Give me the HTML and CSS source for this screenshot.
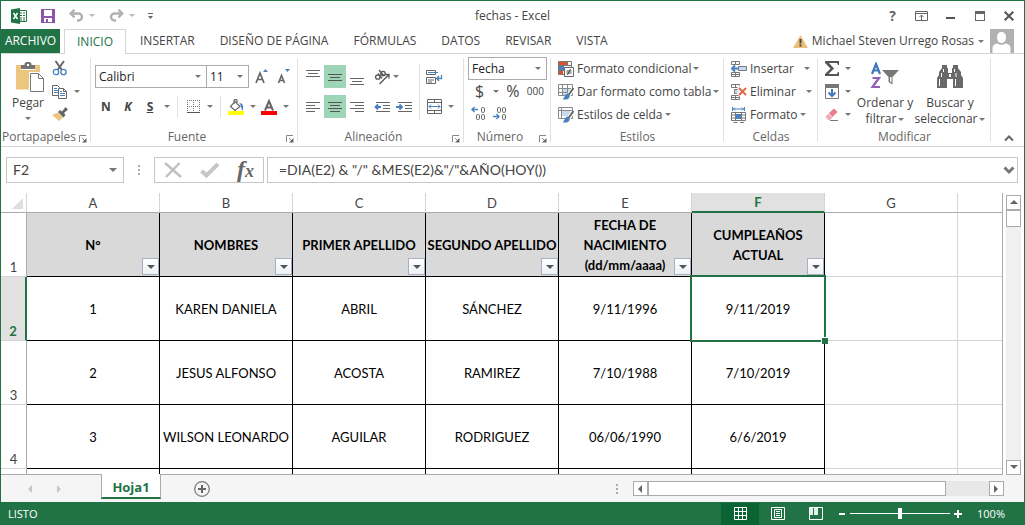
FILE: index.html
```html
<!DOCTYPE html>
<html lang="es">
<head>
<meta charset="utf-8">
<title>fechas - Excel</title>
<link rel="stylesheet" href="styles.css">
</head>
<body>
<div class="window">

  <header class="titlebar">
    <div class="quick">
      <svg class="logo" width="16" height="16" viewBox="0 0 16 16" aria-hidden="true"><path fill="#fff" stroke="#217346" d="M8 2.500h7.500v11H8z"/><path stroke="#217346" d="M9 5h2M12 5h2M9 7.500h2M12 7.500h2M9 10h2M12 10h2M9 12h2M12 12h2"/><path fill="#217346" d="M0 1.500 9 0v16l-9-1.500z"/><path stroke="#fff" stroke-width="1.500" fill="none" d="m2.500 5 4 6m0-6-4 6"/></svg>
      <button class="tool save" aria-label="Guardar"><svg width="14" height="14" viewBox="0 0 14 14"><path fill="#8a57ab" fill-rule="evenodd" d="M0 0h14v14H0zM3 1v6h8V1zM3 9v4h2v-3h2v3h4V9z"/></svg></button>
      <button class="tool undo" aria-label="Deshacer"><svg width="15" height="13" viewBox="0 0 15 13"><path fill="none" stroke="#b1b1b1" stroke-width="2.400" d="M2 4.500h7.500a3.500 3.500 0 0 1 0 7H8"/><path fill="none" stroke="#b1b1b1" stroke-width="2.400" d="M5.500.7 1.700 4.500l3.800 3.800"/></svg></button>
      <span class="caret light"></span>
      <button class="tool redo" aria-label="Rehacer"><svg width="15" height="13" viewBox="0 0 15 13"><path fill="none" stroke="#b1b1b1" stroke-width="2.400" d="M13 4.500H5.500a3.500 3.500 0 0 0 0 7H7"/><path fill="none" stroke="#b1b1b1" stroke-width="2.400" d="m9.500.7 3.800 3.800-3.800 3.800"/></svg></button>
      <span class="caret light"></span>
      <button class="tool more" aria-label="Personalizar"><svg width="6" height="6" viewBox="0 0 6 6"><path fill="#666" d="M0 0h5v1H0zM0 3h5L2.500 6z"/></svg></button>
    </div>
    <h1 class="title">fechas - Excel</h1>
    <div class="controls">
      <button class="tool help" aria-label="Ayuda">?</button>
      <button class="tool" aria-label="Opciones de cinta"><svg width="13" height="10" viewBox="0 0 13 10"><path fill="none" stroke="#666" d="M.5.5h12v9H.5zM.5 2.500h12M6.500 9V4M4.500 6l2-2 2 2"/></svg></button>
      <button class="tool" aria-label="Minimizar"><svg width="10" height="10" viewBox="0 0 10 10"><path fill="#555" d="M0 6h9v2H0z"/></svg></button>
      <button class="tool" aria-label="Maximizar"><svg width="10" height="10" viewBox="0 0 10 10"><path fill="#666" fill-rule="evenodd" d="M0 0h10v10H0zM1 3v6h8V3z"/></svg></button>
      <button class="tool" aria-label="Cerrar"><svg width="10" height="10" viewBox="0 0 10 10"><path stroke="#555" stroke-width="2" d="m.7.7 8.600 8.600m0-8.600L.7 9.300"/></svg></button>
    </div>
  </header>

  <nav class="tabs">
    <button class="tab file">ARCHIVO</button>
    <button class="tab active">INICIO</button>
    <button class="tab">INSERTAR</button>
    <button class="tab">DISEÑO DE PÁGINA</button>
    <button class="tab">FÓRMULAS</button>
    <button class="tab">DATOS</button>
    <button class="tab">REVISAR</button>
    <button class="tab">VISTA</button>
    <button class="account">
      <svg width="15" height="13" viewBox="0 0 15 13"><path fill="#ecc07a" d="M7.500 0 15 13H0z"/><path fill="#444" d="M6.500 4h2v4.500h-2zM6.500 9.500h2v2h-2z"/></svg>
      <span>Michael Steven Urrego Rosas</span>
      <span class="caret"></span>
      <svg class="avatar" width="24" height="24" viewBox="0 0 24 24"><path fill="#b1b1b1" d="M0 0h24v24H0z"/><path fill="#fff" d="M11.500 3c3 0 4.500 2 4.500 5s-1.500 6-4.500 6S7 11 7 8s1.500-5 4.500-5M2.500 24v-5c0-2.500 2-4 5-4.500 2 1.700 6 1.700 8 0 3 .5 5 2 5 4.500v5z"/></svg>
    </button>
  </nav>

  <div class="ribbon">
    <section class="group clipboard">
      <div class="body">
        <button class="big paste">
          <svg width="28" height="31" viewBox="0 0 28 31"><path fill="#ecc57f" d="M0 3h24v24.500H0z"/><path fill="#fff" d="M4 3h16v6H4z"/><path fill="#ecc57f" d="M4 3h1v6H4zM19 3h1v6h-1zM5 8h14v1H5z"/><path fill="#737373" d="M5 3h3.500V1.500L10 0h4l1.500 1.500V3H19v4H5z"/><path fill="#fff" d="M11 2h2v2h-2z"/><path fill="#fff" stroke="#fff" stroke-width="3" d="M14.500 11.500h8l5 5v13h-13z"/><path fill="#fff" stroke="#777" d="M14.500 11.500h8l5 5v13h-13zM22.500 11.500v5h5"/></svg>
          <span>Pegar</span>
          <span class="caret"></span>
        </button>
        <div class="stack">
          <button class="tool" aria-label="Cortar"><svg width="16" height="16" viewBox="0 0 16 16"><path fill="none" stroke="#666" stroke-width="2" d="m3.500 1 6.500 9M12 1l-6.500 9"/><circle cx="4" cy="12" r="2.700" fill="none" stroke="#4a80bd" stroke-width="1.300"/><circle cx="11.500" cy="12" r="2.700" fill="none" stroke="#4a80bd" stroke-width="1.300"/></svg></button>
          <span class="pair"><button class="tool" aria-label="Copiar"><svg width="16" height="14" viewBox="0 0 16 14"><path fill="#fff" stroke="#666" d="M.5.5h5l2 2v8h-7z"/><path stroke="#4a80bd" d="M2 3.500h3M2 5.500h4M2 7.500h4"/><path fill="#fff" stroke="#666" d="M6.500 3.500h5l3 3v7h-8zM11.500 3.500v3h3"/><path stroke="#4a80bd" d="M8 6.500h2M8 8.500h5M8 10.500h5"/></svg></button><span class="caret"></span></span>
          <button class="tool" aria-label="Copiar formato"><svg width="16" height="14" viewBox="0 0 16 14"><path fill="#ecc57f" d="m0 8 6-2.500 5 5L7 14z"/><path fill="#666" d="m6 5 2-2 2 1.500L13.500 0 16 2.500 12 6l1.500 2-2 2.500z"/></svg></button>
        </div>
      </div>
      <h2 class="label">Portapapeles</h2><button class="launch" aria-label="Más opciones de Portapapeles"><svg width="8" height="8" viewBox="0 0 8 8"><path fill="none" stroke="#888" d="M.5 7V.5H7M3 3l3 3"/><path fill="#666" d="M7.500 3v4.500H3z"/></svg></button>
    </section>

    <section class="group font">
      <div class="body rows">
        <div class="row">
          <span class="combo name"><select aria-label="Fuente"><option>Calibri</option></select></span><span class="combo size"><select aria-label="Tamaño de fuente"><option>11</option></select></span>
          <button class="tool cell grow" aria-label="Aumentar tamaño"><svg width="14" height="16" viewBox="0 0 14 16"><path fill="none" stroke="#666" stroke-width="1.700" d="m1 14 4-10L9 14M2.500 10.500h5"/><path fill="#4a80bd" d="M8 3h5l-2.500-3z"/></svg></button>
          <button class="tool cell" aria-label="Disminuir tamaño"><svg width="14" height="16" viewBox="0 0 14 16"><path fill="none" stroke="#666" stroke-width="1.600" d="m1.500 14 3-7.500 3 7.500M2.500 11.500h4"/><path fill="#4a80bd" d="M8 0h5l-2.500 3z"/></svg></button>
        </div>
        <div class="row">
          <button class="tool cell"><b>N</b></button>
          <button class="tool cell"><b><i>K</i></b></button>
          <button class="tool cell"><b><u>S</u></b></button>
          <span class="caret wide"></span>
          <span class="rule"></span>
          <button class="tool cell" aria-label="Bordes"><svg width="13" height="14" viewBox="0 0 13 14"><path stroke="#777" stroke-dasharray="1 1" d="M0 .5h13M0 6.500h13M.5 0v13M6.500 0v13M12.500 0v13"/><path stroke="#555" d="M0 12.500h13"/></svg></button>
          <span class="caret wide"></span>
          <span class="rule"></span>
          <button class="tool cell" aria-label="Color de relleno"><svg width="16" height="16" viewBox="0 0 16 16"><path fill="#fff" stroke="#666" stroke-width="1.200" d="m7 2.500 5 5L7 11.500 2.500 7.500zM6 5V1.500c0-1.500 3-1.500 3 0V5"/><path fill="#4a80bd" d="M11 4c4 0 5 3 3.500 8C13 10 14 7 11 4"/><path fill="#ff0" d="M0 12h16v4H0z"/></svg></button>
          <span class="caret wide"></span>
          <button class="tool cell" aria-label="Color de fuente"><svg width="16" height="16" viewBox="0 0 16 16"><path fill="none" stroke="#666" stroke-width="2" d="m4 11.500 4-9.500 4 9.500M5.500 8.500h5"/><path fill="#f00" d="M0 12h16v4H0z"/></svg></button>
          <span class="caret wide"></span>
        </div>
      </div>
      <h2 class="label">Fuente</h2><button class="launch" aria-label="Más opciones de Fuente"><svg width="8" height="8" viewBox="0 0 8 8"><path fill="none" stroke="#888" d="M.5 7V.5H7M3 3l3 3"/><path fill="#666" d="M7.500 3v4.500H3z"/></svg></button>
    </section>

    <section class="group align">
      <div class="body split">
        <div class="rows">
          <div class="row">
            <button class="tool cell" aria-label="Alinear arriba"><svg width="14" height="16" viewBox="0 0 14 16"><path stroke="#666" d="M0 1.500h14M2 4.500h10M0 7.500h14"/></svg></button>
            <button class="tool cell on" aria-label="Alinear en medio"><svg width="14" height="16" viewBox="0 0 14 16"><path stroke="#555" d="M0 5.500h14M2 8.500h10M0 11.500h14"/></svg></button>
            <button class="tool cell" aria-label="Alinear abajo"><svg width="14" height="16" viewBox="0 0 14 16"><path stroke="#666" d="M0 9.500h14M2 12.500h10M0 15.500h14"/></svg></button>
            <button class="tool cell angle" aria-label="Orientación"><svg width="17" height="16" viewBox="0 0 17 16"><g fill="none" stroke="#555" stroke-width="1.300"><circle cx="3.800" cy="8" r="2.200"/><path d="m4 4.500 4 5M5 1l5 6"/><circle cx="9" cy="4.500" r="2.200"/><path d="m5.500 15 9-9M11 5.500h4v4"/></g></svg></button>
            <span class="caret wide"></span>
          </div>
          <div class="row">
            <button class="tool cell" aria-label="Alinear a la izquierda"><svg width="14" height="12" viewBox="0 0 14 12"><path stroke="#666" d="M0 1.500h14M0 4.500h9M0 7.500h14M0 10.500h9"/></svg></button>
            <button class="tool cell on" aria-label="Centrar"><svg width="14" height="12" viewBox="0 0 14 12"><path stroke="#555" d="M0 1.500h14M2 4.500h10M0 7.500h14M2 10.500h10"/></svg></button>
            <button class="tool cell" aria-label="Alinear a la derecha"><svg width="14" height="12" viewBox="0 0 14 12"><path stroke="#666" d="M0 1.500h14M5 4.500h9M0 7.500h14M5 10.500h9"/></svg></button>
            <button class="tool cell angle" aria-label="Disminuir sangría"><svg width="16" height="12" viewBox="0 0 16 12"><path stroke="#666" d="M2 1.500h14M9 4.500h7M9 7.500h7M2 10.500h14"/><path fill="none" stroke="#4a80bd" stroke-width="1.800" d="M1 6h6M4 3.500 1.500 6 4 8.500"/></svg></button>
            <button class="tool cell" aria-label="Aumentar sangría"><svg width="16" height="12" viewBox="0 0 16 12"><path stroke="#666" d="M2 1.500h14M9 4.500h7M9 7.500h7M2 10.500h14"/><path fill="none" stroke="#4a80bd" stroke-width="1.800" d="M0 6h6M3.500 3.500 6 6 3.500 8.500"/></svg></button>
          </div>
        </div>
        <span class="rule tall"></span>
        <div class="rows">
          <div class="row"><button class="tool cell" aria-label="Ajustar texto"><svg width="17" height="16" viewBox="0 0 17 16"><path fill="#fff" stroke="#666" d="M.5 1.500h9v4h-9zM.5 8.500h9v6h-9zM2 11h6M2 13h4"/><path stroke="#4a80bd" d="M2 3.500h10"/><path fill="none" stroke="#4a80bd" stroke-width="1.300" d="M15.500 6v3.500H11M13 7l-2.300 2.500L13 12"/></svg></button></div>
          <div class="row"><button class="tool cell" aria-label="Combinar y centrar"><svg width="15" height="15" viewBox="0 0 15 15"><path fill="none" stroke="#666" d="M.5.5h14v14H.5zM.5 3.500h14M.5 11.500h14M7.500 0v3M7.500 12v3"/><path fill="none" stroke="#4a80bd" d="M2 7.500h11M4 5.500l-2 2 2 2M11 5.500l2 2-2 2"/></svg></button><span class="caret wide"></span></div>
        </div>
      </div>
      <h2 class="label">Alineación</h2><button class="launch" aria-label="Más opciones de Alineación"><svg width="8" height="8" viewBox="0 0 8 8"><path fill="none" stroke="#888" d="M.5 7V.5H7M3 3l3 3"/><path fill="#666" d="M7.500 3v4.500H3z"/></svg></button>
    </section>

    <section class="group number">
      <div class="body list">
        <span class="combo format"><select aria-label="Formato de número"><option>Fecha</option></select></span>
        <div class="row currency"><button class="tool sign">$</button><span class="caret"></span><button class="tool sign">%</button><button class="tool zeros">000</button></div>
        <div class="row decimals">
          <button class="tool" aria-label="Aumentar decimales"><svg width="15" height="14" viewBox="0 0 15 14"><path fill="none" stroke="#4a80bd" stroke-width="1.400" d="M1 3.500h6M3.500 1 1 3.500 3.500 6"/><g fill="none" stroke="#666"><rect x="10.500" y="1.500" width="3" height="5" rx="1.300"/><rect x="5.500" y="8.500" width="3" height="5" rx="1.300"/><rect x="10.500" y="8.500" width="3" height="5" rx="1.300"/></g></svg></button>
          <button class="tool" aria-label="Disminuir decimales"><svg width="15" height="14" viewBox="0 0 15 14"><path fill="none" stroke="#4a80bd" stroke-width="1.400" d="M1 10.500h6M4.500 8 7 10.500 4.500 13"/><g fill="none" stroke="#666"><rect x="5.500" y="1.500" width="3" height="5" rx="1.300"/><rect x="10.500" y="1.500" width="3" height="5" rx="1.300"/><rect x="10.500" y="8.500" width="3" height="5" rx="1.300"/></g></svg></button>
        </div>
      </div>
      <h2 class="label">Número</h2><button class="launch" aria-label="Más opciones de Número"><svg width="8" height="8" viewBox="0 0 8 8"><path fill="none" stroke="#888" d="M.5 7V.5H7M3 3l3 3"/><path fill="#666" d="M7.500 3v4.500H3z"/></svg></button>
    </section>

    <section class="group styles">
      <div class="body list">
        <button class="item"><svg width="16" height="16" viewBox="0 0 16 16"><path fill="#fff" stroke="#777" d="M.5.5h13v13H.5zM.5 4.500h13M.5 9.500h13M9.500 0v5"/><path fill="#d9532c" d="M1 1h8v3H1zM1 10h4v3H1z"/><path fill="#4a80bd" d="M1 5h5v4H1z"/><path fill="#fff" stroke="#666" d="M6.500 6.500h9v9h-9z"/><path stroke="#444" d="M8.500 10h5M8.500 12h5M12.500 8l-3 6"/></svg><span>Formato condicional</span><span class="caret"></span></button>
        <button class="item"><svg width="16" height="16" viewBox="0 0 16 16"><path fill="#c9daee" d="M4 4h10v8H4z"/><path fill="none" stroke="#888" d="M.5.5h14v11H.5zM.5 4.500h14M.5 8.500h14M4.500 0v12M9.500 0v12"/><path stroke="#fff" stroke-width="4" d="m15 5-5 7"/><path stroke="#666" stroke-width="2" d="m15.500 4-5 7"/><path fill="#4a80bd" d="M10 9.500c3 1 2 6-2 6H4.500C7 14 6 10 10 9.500"/></svg><span>Dar formato como tabla</span><span class="caret"></span></button>
        <button class="item"><svg width="16" height="16" viewBox="0 0 16 16"><path fill="#fff" stroke="#888" d="M.5.5h14v11H.5zM.5 3.500h14M3.500 0v12"/><path fill="#c9daee" d="M4 4h8v5H4z"/><path stroke="#fff" stroke-width="4" d="m15 5-5 7"/><path stroke="#666" stroke-width="2" d="m15.500 4-5 7"/><path fill="#4a80bd" d="M10 9.500c3 1 2 6-2 6H4.500C7 14 6 10 10 9.500"/></svg><span>Estilos de celda</span><span class="caret"></span></button>
      </div>
      <h2 class="label">Estilos</h2>
    </section>

    <section class="group cells">
      <div class="body list">
        <button class="item"><svg width="16" height="16" viewBox="0 0 16 16"><path fill="#fff" stroke="#777" d="M.5.5h8v3h-8zM4.500 0v4M.5 11.500h8v4h-8zM4.500 11v5M.5 13.500h8"/><path fill="#c9daee" stroke="#777" d="M7.500 5.500h8v4h-8z"/><path fill="none" stroke="#4a80bd" stroke-width="2" d="M1 7.500h7M4 4.500l-3 3 3 3"/></svg><span>Insertar</span><span class="caret apart"></span></button>
        <button class="item"><svg width="16" height="16" viewBox="0 0 16 16"><path fill="#fff" stroke="#777" d="M.5.5h8v3h-8zM4.500 0v4M.5 11.500h8v4h-8zM4.500 11v5M.5 13.500h8"/><path fill="#c9daee" stroke="#777" d="M3.500 5.500h6v4h-6z"/><path stroke="#fff" stroke-width="4" d="m7 3 8 8m0-8-8 8"/><path stroke="#e0684a" stroke-width="2" d="m8 4 7 7m0-7-7 7"/></svg><span>Eliminar</span><span class="caret apart"></span></button>
        <button class="item"><svg width="16" height="16" viewBox="0 0 16 16"><path fill="none" stroke="#4a80bd" d="M1.500 0v4M13.500 0v4M2 2h11M4 .5 2.500 2 4 3.500M11 .5 12.500 2 11 3.500"/><path fill="#fff" stroke="#777" d="M.5 5.500h14v8H.5zM.5 8h14M.5 11h14M4.500 5v9M10.500 5v9M2.500 15.500h4M9 15.500h4"/><path fill="#4a80bd" d="M5 7h5v5H5z"/></svg><span>Formato</span><span class="caret"></span></button>
      </div>
      <h2 class="label">Celdas</h2>
    </section>

    <section class="group edit">
      <div class="body">
        <div class="list minis">
          <span class="pair"><button class="tool" aria-label="Autosuma"><svg width="16" height="16" viewBox="0 0 16 16"><path fill="#555" d="M1 0h14v4h-1l-1-2H5l5 5.500L4.500 13H13l1-2h1v4H1v-2l5.500-5.500L1 2z"/></svg></button><span class="caret"></span></span>
          <span class="pair"><button class="tool" aria-label="Rellenar"><svg width="16" height="16" viewBox="0 0 16 16"><path fill="#fff" stroke="#777" d="M1.500 1.500h13v13h-13z"/><path fill="#777" d="M1 0h14v4H1z"/><path fill="none" stroke="#3f78bd" stroke-width="2" d="M8 5v7M4.500 8.500 8 12l3.500-3.500"/></svg></button><span class="caret"></span></span>
          <span class="pair"><button class="tool" aria-label="Borrar"><svg width="16" height="16" viewBox="0 0 16 16"><path fill="#e87d92" d="m5 6 5-4.500L13.500 5l-5 5z"/><path fill="#f3a9b7" d="m1.500 9.500 3-3 4 4-2.500 2.500H4z"/><path stroke="#777" d="M6 13.500h8"/></svg></button><span class="caret"></span></span>
        </div>
        <button class="big sort">
          <svg width="30" height="28" viewBox="0 0 30 28"><path fill="none" stroke="#3f78bd" stroke-width="2.200" d="m2 12 4-10 4 10M3.500 8.500h5"/><path fill="none" stroke="#9360b8" stroke-width="2.200" d="M2.500 16H9l-6.500 9H10"/><path fill="#777" d="M12 8h17l-6.500 7v7.500L18.500 20v-5z"/><path fill="#fff" d="M20 15h1.500v5.500L20 19.500z"/></svg>
          <span>Ordenar y</span>
          <span class="line">filtrar <span class="caret"></span></span>
        </button>
        <button class="big find">
          <svg width="28" height="28" viewBox="0 0 28 28"><path fill="#696969" d="M6 3h5v3h1v5h4V6h1V3h5v3l3 4v3l2 3v10H17v-9h-6v9H1V16l2-3v-3l3-4z"/><path stroke="#fff" d="M7.500 7v3M5.500 11v4M3.500 17v7M18.500 7v3M20 11v4M19.500 17v7"/><path fill="#fff" d="M13 12h2v3h-2z"/></svg>
          <span>Buscar y</span>
          <span class="line">seleccionar <span class="caret"></span></span>
        </button>
      </div>
      <h2 class="label">Modificar</h2>
    </section>
    <button class="collapse" aria-label="Contraer la cinta"><svg width="10" height="7" viewBox="0 0 10 7"><path fill="none" stroke="#666" stroke-width="2" d="m1 5.500 4-4 4 4"/></svg></button>
  </div>

  <div class="formulabar">
    <div class="namebox"><input aria-label="Cuadro de nombres" value="F2"><button class="tool" aria-label="Nombres"><span class="caret large"></span></button></div>
    <span class="dots"></span>
    <div class="entry">
      <button class="tool" aria-label="Cancelar"><svg width="18" height="16" viewBox="0 0 18 16"><path fill="none" stroke="#c1c1c1" stroke-width="2.500" d="m1 1 16 14M15.500 1 2 15"/></svg></button>
      <button class="tool" aria-label="Introducir"><svg width="20" height="16" viewBox="0 0 20 16"><path fill="none" stroke="#c6c6c6" stroke-width="4" d="m1.500 9 5 4.500L18 2"/></svg></button>
      <button class="tool fx" aria-label="Insertar función"><i>f<small>x</small></i></button>
    </div>
    <div class="formula"><input aria-label="Barra de fórmulas" value='=DIA(E2) &amp; "/" &amp;MES(E2)&amp;"/"&amp;AÑO(HOY())'><button class="tool" aria-label="Expandir"><svg width="12" height="9" viewBox="0 0 12 9"><path fill="none" stroke="#777" stroke-width="3" d="m1.500 1.500 4.500 4.500 4.500-4.500"/></svg></button></div>
  </div>

  <main class="sheet">
    <div class="viewport">
      <table class="grid">
        <colgroup><col class="c-head"><col class="c"><col class="c"><col class="c"><col class="c"><col class="c"><col class="c"><col class="c"><col></colgroup>
        <thead>
          <tr><th class="corner"><svg width="11" height="11" viewBox="0 0 11 11"><path fill="#dfdfdf" d="M11 0v11H0z"/></svg></th><th>A</th><th>B</th><th>C</th><th>D</th><th>E</th><th class="current">F</th><th>G</th><th></th></tr>
        </thead>
        <tbody>
          <tr class="titles"><th>1</th>
            <td class="d">N°<button class="filter" aria-label="Filtrar N°"></button></td>
            <td class="d">NOMBRES<button class="filter" aria-label="Filtrar nombres"></button></td>
            <td class="d">PRIMER APELLIDO<button class="filter" aria-label="Filtrar primer apellido"></button></td>
            <td class="d">SEGUNDO APELLIDO<button class="filter" aria-label="Filtrar segundo apellido"></button></td>
            <td class="d">FECHA DE<br>NACIMIENTO<br>(dd/mm/aaaa)<button class="filter" aria-label="Filtrar fecha"></button></td>
            <td class="d">CUMPLEAÑOS<br>ACTUAL<button class="filter" aria-label="Filtrar cumpleaños"></button></td>
            <td></td><td></td></tr>
          <tr><th class="current">2</th><td class="d">1</td><td class="d">KAREN DANIELA</td><td class="d">ABRIL</td><td class="d">SÁNCHEZ</td><td class="d">9/11/1996</td><td class="d selected">9/11/2019</td><td></td><td></td></tr>
          <tr><th>3</th><td class="d">2</td><td class="d">JESUS ALFONSO</td><td class="d">ACOSTA</td><td class="d">RAMIREZ</td><td class="d">7/10/1988</td><td class="d">7/10/2019</td><td></td><td></td></tr>
          <tr><th>4</th><td class="d">3</td><td class="d">WILSON LEONARDO</td><td class="d">AGUILAR</td><td class="d">RODRIGUEZ</td><td class="d">06/06/1990</td><td class="d">6/6/2019</td><td></td><td></td></tr>
          <tr><th></th><td class="d"></td><td class="d"></td><td class="d"></td><td class="d"></td><td class="d"></td><td class="d"></td><td></td><td></td></tr>
        </tbody>
      </table>
    </div>
    <div class="vscroll">
      <button class="arrow up" aria-label="Subir"></button>
      <span class="thumb"></span>
      <button class="arrow down" aria-label="Bajar"></button>
    </div>
  </main>

  <div class="sheettabs">
    <div class="steps"><button class="tool step prev" aria-label="Hoja anterior"></button><button class="tool step next" aria-label="Hoja siguiente"></button></div>
    <button class="sheettab">Hoja1</button>
    <button class="tool add" aria-label="Hoja nueva"><svg width="16" height="16" viewBox="0 0 16 16"><circle cx="8" cy="8" r="7.300" fill="none" stroke="#777" stroke-width="1.200"/><path stroke="#666" stroke-width="2" d="M4 8h8M8 4v8"/></svg></button>
    <span class="dots"></span>
    <div class="hscroll">
      <button class="arrow left" aria-label="Izquierda"></button>
      <span class="thumb"></span>
      <button class="arrow right" aria-label="Derecha"></button>
    </div>
  </div>

  <footer class="status">
    <span class="ready">LISTO</span>
    <button class="tool view on" aria-label="Normal"><svg width="13" height="13" viewBox="0 0 13 13"><path fill="none" stroke="#fff" d="M.5.5h12v12H.5zM.5 4.500h12M.5 8.500h12M4.500 0v13M8.500 0v13"/></svg></button>
    <button class="tool view" aria-label="Diseño de página"><svg width="14" height="13" viewBox="0 0 14 13"><path fill="none" stroke="#fff" d="M.5.5h13v12H.5zM3.500 2.500h7v8h-7zM5 4.500h4M5 6.500h4M5 8.500h4"/></svg></button>
    <button class="tool view" aria-label="Salto de página"><svg width="14" height="13" viewBox="0 0 14 13"><path fill="none" stroke="#fff" d="M.5.5h13v12H.5z"/><path fill="#e4f0e9" d="M1 1h3v7H1zM5 1h4v7H5z"/></svg></button>
    <button class="tool zoom" aria-label="Alejar"><svg width="7" height="8" viewBox="0 0 7 8"><path fill="#fff" d="M0 3h6v2H0z"/></svg></button>
    <input class="slider" type="range" aria-label="Zoom" min="0" max="200" value="100">
    <button class="tool zoom" aria-label="Acercar"><svg width="8" height="8" viewBox="0 0 8 8"><path fill="#fff" d="M0 3h3V0h2v3h3v2H5v3H3V5H0z"/></svg></button>
    <span class="percent">100%</span>
  </footer>
</div>
</body>
</html>
```
FILE: styles.css
```css
* { box-sizing: border-box; }

body {
  margin: 0;
  background: #fff;
  color: #444;
  font: 12px/16px "Open Sans", "Noto Sans", sans-serif;
}

svg { display: block; flex: none; }

button, input, select {
  margin: 0;
  padding: 0;
  border: 0;
  background: none;
  color: inherit;
  font: inherit;
}

.window {
  display: flex;
  flex-direction: column;
  min-height: 100vh;
  border: 1px solid #217346;
  border-bottom: 0;
}

.tool { display: flex; align-items: center; justify-content: center; flex: none; }

.caret {
  display: inline-block;
  flex: none;
  width: 0;
  height: 0;
  border: 3px solid transparent;
  border-top-color: #777;
  border-bottom: 0;
}
.caret.light { border-top-color: #b8b8b8; }
.caret.wide { margin: 0 2px 0 3px; }
.caret.large { border-width: 4px 4px 0; }
.caret.apart { margin-left: 8px; }

/* Title bar */
.titlebar { display: grid; grid-template-columns: 1fr auto 1fr; align-items: center; height: 28px; padding-top: 1px; }
.quick { display: flex; align-items: center; padding-left: 10px; }
.save { margin-left: 14px; }
.undo, .redo { margin: 0 5px 0 14px; }
.more { margin-left: 13px; }
.title { margin: 0; font-size: 12px; font-weight: 400; }
.controls { display: flex; justify-content: flex-end; padding-right: 1px; }
.controls .tool { width: 29px; height: 20px; }
.help { color: #666; font-size: 14px; font-weight: 700; }

/* Ribbon tabs */
.tabs { display: flex; height: 25px; border-bottom: 1px solid #d4d4d4; }
.tab { padding: 0 12px 0 13px; white-space: nowrap; }
.tab.file { width: 59px; margin-right: 4px; padding: 0; background: #217346; color: #fff; }
.tab.active {
  width: 62px;
  margin-right: 1px;
  margin-bottom: -1px;
  padding: 0;
  border: 1px solid #d4d4d4;
  border-bottom: 0;
  background: #fff;
  color: #217346;
}
.account { display: flex; align-items: center; gap: 4px; margin-left: auto; padding-right: 10px; white-space: nowrap; }
.avatar { margin-left: 2px; }

/* Ribbon */
.ribbon { display: flex; height: 93px; border-bottom: 1px solid #d4d4d4; }
.group { position: relative; display: flex; flex-direction: column; flex: none; padding-top: 3px; }
.group::after { content: ""; position: absolute; top: 4px; right: 0; bottom: 4px; width: 1px; background: #e1e1e1; }
.body { display: flex; height: 71px; }
.label { margin: 0; height: 19px; color: #666; font-size: 12px; font-weight: 400; line-height: 19px; text-align: center; }
.launch { position: absolute; right: 4px; bottom: 3px; }

.clipboard { width: 90px; }
.font { width: 207px; }
.align { width: 166px; }
.number { width: 87px; }
.styles { width: 173px; }
.cells { width: 94px; }
.edit { width: 173px; }
.clipboard .label { padding-right: 14px; }
.font .label, .align .label, .number .label { padding-right: 15px; }

.pair { display: flex; align-items: center; gap: 6px; }
.big { display: flex; flex-direction: column; align-items: center; white-space: nowrap; }
.big .line { display: flex; align-items: center; gap: 2px; }
.paste { width: 51px; padding-top: 5px; }
.paste svg { margin: 0 0 2px 6px; }
.paste span { margin-left: 3px; }
.paste span + .caret { margin-top: 6px; }
.stack { display: flex; flex-direction: column; justify-content: space-between; align-items: flex-start; padding: 3px 0 6px; }

.rows { display: flex; flex-direction: column; gap: 7px; padding-top: 8px; }
.row { display: flex; align-items: center; height: 23px; }
.cell { width: 22px; height: 23px; }
.cell.on { background: #9fd5b7; }
.font .rows { padding-left: 4px; }
.grow { margin-left: 2px; }
.rule { width: 1px; height: 22px; margin: 0 4px 0 5px; background: #e1e1e1; }
.rule.tall { height: 56px; }

.combo { position: relative; display: flex; height: 23px; border: 1px solid #ababab; }
.combo::after {
  content: "";
  position: absolute;
  top: 9px;
  right: 5px;
  border: 3px solid transparent;
  border-top-color: #777;
  border-bottom: 0;
  pointer-events: none;
}
.combo select { width: 100%; padding-left: 3px; appearance: none; color: #222; }
.combo.name { width: 112px; }
.combo.size { width: 42px; border-left: 0; }
.combo.format { width: 79px; }

.align .split { align-items: flex-start; padding-left: 4px; }
.split .rows { padding-top: 8px; }
.split .rule { margin: 7px 3px 0 4px; }
.angle { margin-left: 3px; }
.split .angle + .caret { margin-left: 0; }
.align .rows:first-child { width: 113px; }

.list { display: flex; flex-direction: column; }
.number .list { padding-left: 4px; }
.number .row { height: 22px; }
.currency { padding-left: 7px; }
.sign { font-size: 16px; }
.currency .caret { margin: 0 7px 0 9px; }
.zeros { margin-left: auto; padding-right: 7px; font-size: 10px; }
.decimals { gap: 6px; padding-left: 3px; }
.item { display: flex; align-items: center; gap: 2px; height: 23px; padding-left: 7px; white-space: nowrap; }
.item svg { margin-right: 1px; }

.minis { width: 37px; padding-left: 6px; }
.minis .pair { gap: 5px; height: 23px; }
.edit .big { padding-top: 5px; }
.edit .big svg { margin-bottom: 5px; }
.sort { width: 60px; }
.find { width: 70px; }
.collapse { margin: auto 10px 4px auto; }

/* Formula bar */
.formulabar { display: flex; align-items: stretch; height: 46px; padding: 10px 6px 10px 5px; }
.namebox, .entry, .formula { display: flex; align-items: center; border: 1px solid #c6c6c6; }
.namebox { width: 118px; padding: 0 6px; }
.namebox input, .formula input { flex: 1; min-width: 0; font: 14px/20px Lato, "Open Sans", sans-serif; }
.dots {
  width: 2px;
  height: 10px;
  background: repeating-linear-gradient(#ababab 0 2px, transparent 2px 4px);
}
.formulabar .dots { align-self: center; margin: 0 14px; }
.entry { width: 110px; justify-content: space-between; padding: 0 9px; }
.fx { color: #666; font: 700 24px/20px "Liberation Serif", serif; }
.fx small { font-size: 18px; }
.formula { flex: 1; margin-left: 3px; padding: 0 2px 0 11px; }

/* Sheet */
.sheet { display: flex; flex: 1; min-height: 0; }
.viewport { flex: 1; height: 282px; overflow: hidden; border-right: 1px solid #ababab; border-bottom: 1px solid #ababab; }
.grid { width: 100%; border-spacing: 0; table-layout: fixed; }
.c-head { width: 26px; }
.c { width: 133px; }
.grid th, .grid td { padding: 0; }
.grid th { border-right: 1px solid #d4d4d4; color: #444; font: 13px/18px Lato, "Open Sans", sans-serif; }
.grid thead th { height: 20px; border-bottom: 1px solid #ababab; }
.grid thead .current { border-bottom: 2px solid #217346; background: #e1e1e1; color: #217346; font-weight: 700; }
.corner svg { margin: 1px 0 0 11px; }
.grid tbody th {
  height: 64px;
  border-right-color: #ababab;
  border-bottom: 1px solid #d4d4d4;
  vertical-align: bottom;
}
.grid tbody .current { border-right: 2px solid #217346; background: #e1e1e1; color: #217346; font-weight: 700; }
.grid td {
  position: relative;
  border-right: 1px solid #d4d4d4;
  border-bottom: 1px solid #d4d4d4;
  color: #000;
  font: 13px/20px Lato, "Open Sans", sans-serif;
  text-align: center;
  white-space: nowrap;
}
.grid .d { border-color: #000; }
.titles .d { background: #d9d9d9; font-weight: 700; }
.grid td:last-child, .grid thead th:last-child { border-right: 0; }
.filter {
  position: absolute;
  right: 0;
  bottom: 1px;
  width: 17px;
  height: 17px;
  border: 1px solid #a5b1c2;
  background: linear-gradient(#fff, #eef0f4);
}
.filter::after { content: ""; position: absolute; top: 6px; left: 4px; border: 4px solid transparent; border-top-color: #555; border-bottom: 0; }
.grid .selected { z-index: 1; }
.selected::before { content: ""; position: absolute; inset: -2px; border: 2px solid #217346; }
.selected::after { content: ""; position: absolute; right: -4px; bottom: -4px; width: 6px; height: 6px; border: 1px solid #fff; border-width: 1px 0 0 1px; background: #217346; }

.arrow { position: relative; flex: none; width: 15px; height: 15px; border: 1px solid #ababab; background: #fff; }
.arrow::after { content: ""; position: absolute; top: 4px; left: 3px; border: 0 solid transparent; }
.arrow.up::after { border-width: 0 4px 4px; border-bottom-color: #666; }
.arrow.down::after { border-width: 4px 4px 0; border-top-color: #666; }
.arrow.left::after { top: 3px; left: 4px; border-width: 4px 4px 4px 0; border-right-color: #666; }
.arrow.right::after { top: 3px; left: 4px; border-width: 4px 0 4px 4px; border-left-color: #666; }
.thumb { border: 1px solid #ababab; background: #fff; }
.vscroll { display: flex; flex-direction: column; width: 15px; margin: 2px 3px 0; background: #f0f0f0; }
.vscroll .thumb { height: 17px; }
.down { margin-top: auto; }

/* Sheet tabs */
.sheettabs { display: flex; align-items: center; height: 27px; padding-right: 20px; background: #f5f5f5; }
.steps { display: flex; justify-content: space-between; width: 100px; padding: 0 40px 0 27px; }
.step { border: 4px solid transparent; }
.prev { border-left: 0; border-right-color: #c6c6c6; }
.next { border-right: 0; border-left-color: #c6c6c6; }
.sheettab {
  align-self: flex-start;
  width: 60px;
  height: 25px;
  margin-top: -1px;
  padding-top: 2px;
  border: 1px solid #ababab;
  border-top: 0;
  border-bottom: 2px solid #217346;
  background: #fff;
  color: #217346;
  font-size: 13px;
  font-weight: 700;
}
.add { margin-left: 33px; }
.sheettabs .dots { margin-left: auto; margin-right: 15px; }
.hscroll { display: flex; width: 40%; max-width: 371px; background: #e8e8e8; }
.hscroll .thumb { width: 298px; margin-right: auto; }

/* Status bar */
.status { display: flex; align-items: center; height: 23px; padding: 0 19px 0 7px; background: #217346; color: #fff; font-size: 11px; }
.ready { margin-right: auto; }
.view { width: 38px; height: 22px; }
.view.on { background: #0a6332; }
.zoom { margin: 0 4px; }
.slider { width: 100px; height: 12px; appearance: none; background: linear-gradient(#fff, #fff) center / 100% 1px no-repeat; }
.slider::-webkit-slider-thumb { appearance: none; width: 4px; height: 11px; background: #fff; }
.percent { width: 35px; margin-left: 4px; text-align: right; }
```
